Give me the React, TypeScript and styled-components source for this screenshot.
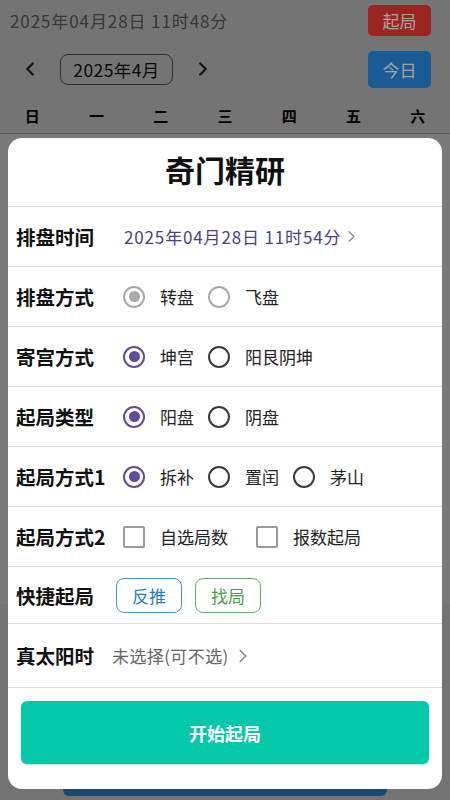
import styled, { createGlobalStyle, css } from 'styled-components'
import { useState } from 'react'
import { ChevronLeft, ChevronRight } from 'lucide-react'

const GlobalStyle = createGlobalStyle`
  * { box-sizing: border-box; }
  html, body { margin: 0; padding: 0; }
  body {
    width: 450px;
    height: 800px;
    overflow: hidden;
    font-family: "Noto Sans CJK SC", "Noto Sans", sans-serif;
  }
`

const WEEK = ['日', '一', '二', '三', '四', '五', '六']

type Option = { label: string }

export default function App() {
  const [panType, setPanType] = useState(0)
  const [palace, setPalace] = useState(0)
  const [juType, setJuType] = useState(0)
  const [method, setMethod] = useState(0)
  const [checks, setChecks] = useState([false, false])

  const renderRadios = (
    options: Option[],
    value: number,
    onChange: (i: number) => void,
    disabled?: boolean
  ) =>
    options.map((o, i) => (
      <Choice key={o.label} onClick={() => !disabled && onChange(i)}>
        <Radio checked={value === i} disabled={disabled} />
        <ChoiceText>{o.label}</ChoiceText>
      </Choice>
    ))

  return (
    <Screen>
      <GlobalStyle />
      <Page>
        <TopBar>
          <NowText>2025年04月28日 11时48分</NowText>
          <PageButton tone="red">起局</PageButton>
        </TopBar>
        <NavBar>
          <NavArrow>
            <ChevronLeft size={22} strokeWidth={2.6} />
          </NavArrow>
          <MonthBox>2025年4月</MonthBox>
          <NavArrow right>
            <ChevronRight size={22} strokeWidth={2.6} />
          </NavArrow>
          <NavSpacer />
          <PageButton tone="blue" tall>
            今日
          </PageButton>
        </NavBar>
        <WeekRow>
          {WEEK.map(w => (
            <WeekDay key={w}>{w}</WeekDay>
          ))}
        </WeekRow>
        <CalendarBody />
        <BottomArea>
          <BottomBar />
        </BottomArea>
      </Page>

      <Backdrop />

      <Dialog>
        <Title>奇门精研</Title>

        <Row>
          <Label>排盘时间</Label>
          <TimeText>2025年04月28日 11时54分</TimeText>
          <ChevronRight size={19} strokeWidth={1.6} color="#8a8a8a" />
        </Row>

        <Row>
          <Label>排盘方式</Label>
          {renderRadios(
            [{ label: '转盘' }, { label: '飞盘' }],
            panType,
            setPanType,
            true
          )}
        </Row>

        <Row>
          <Label>寄宫方式</Label>
          {renderRadios(
            [{ label: '坤宫' }, { label: '阳艮阴坤' }],
            palace,
            setPalace
          )}
        </Row>

        <Row>
          <Label>起局类型</Label>
          {renderRadios(
            [{ label: '阳盘' }, { label: '阴盘' }],
            juType,
            setJuType
          )}
        </Row>

        <Row>
          <Label>起局方式1</Label>
          {renderRadios(
            [{ label: '拆补' }, { label: '置闰' }, { label: '茅山' }],
            method,
            setMethod
          )}
        </Row>

        <Row>
          <Label>起局方式2</Label>
          {['自选局数', '报数起局'].map((t, i) => (
            <Choice
              key={t}
              wide
              onClick={() =>
                setChecks(checks.map((c, j) => (j === i ? !c : c)))
              }
            >
              <CheckBox checked={checks[i]} />
              <ChoiceText>{t}</ChoiceText>
            </Choice>
          ))}
        </Row>

        <Row short>
          <Label width={100}>快捷起局</Label>
          <OutlineButton tone="blue">反推</OutlineButton>
          <OutlineButton tone="green">找局</OutlineButton>
        </Row>

        <Row tall>
          <Label width={96}>真太阳时</Label>
          <HintText>未选择(可不选)</HintText>
          <ChevronRight size={22} strokeWidth={1.8} color="#8a8a8a" />
        </Row>

        <Footer>
          <StartButton>开始起局</StartButton>
        </Footer>
      </Dialog>
    </Screen>
  )
}

const Screen = styled.div`
  position: relative;
  width: 450px;
  height: 800px;
  overflow: hidden;
`

/* page under the dialog */

const Page = styled.div`
  display: flex;
  flex-direction: column;
  height: 800px;
  background: #b6b6b6;
`

const TopBar = styled.div`
  display: flex;
  align-items: center;
  justify-content: space-between;
  height: 41px;
  padding: 0 19px 0 10px;
`

const NowText = styled.div`
  font-size: 17px;
  color: #575757;
  letter-spacing: 0.9px;
`

type PageButtonProps = { tone: 'red' | 'blue'; tall?: boolean }

const PageButton = styled.div<PageButtonProps>`
  width: 63px;
  height: ${p => (p.tall ? 37 : 31)}px;
  border-radius: 5px;
  display: flex;
  align-items: center;
  justify-content: center;
  font-size: 17px;
  color: #fff;
  background: ${p => (p.tone === 'red' ? '#f03a30' : '#278fe9')};
`

const NavBar = styled.div`
  display: flex;
  align-items: center;
  height: 56px;
  padding: 0 19px;
`

const NavArrow = styled.div<{ right?: boolean }>`
  display: flex;
  align-items: center;
  color: #222;
  margin: ${p => (p.right ? '0 0 0 19px' : '0 19px 0 0')};
`

const MonthBox = styled.div`
  width: 113px;
  height: 31px;
  border: 1.5px solid #4a4a4a;
  border-radius: 8px;
  display: flex;
  align-items: center;
  justify-content: center;
  font-size: 17.5px;
  letter-spacing: 0.4px;
  color: #111;
`

const NavSpacer = styled.div`
  flex: 1;
`

const WeekRow = styled.div`
  display: grid;
  grid-template-columns: repeat(7, 1fr);
  height: 37px;
  border-bottom: 1.5px solid #8c8c8c;
`

const WeekDay = styled.div`
  display: flex;
  align-items: center;
  justify-content: center;
  font-size: 15px;
  font-weight: 700;
  color: #000;
`

const CalendarBody = styled.div`
  height: 470px;
  background: #bdbdbd;
`

const BottomArea = styled.div`
  flex: 1;
  display: flex;
  flex-direction: column;
  justify-content: flex-end;
  align-items: center;
  padding-bottom: 4px;
`

const BottomBar = styled.div`
  width: 324px;
  height: 40px;
  border-radius: 6px;
  background: #2a6fad;
`

/* dialog */

const Backdrop = styled.div`
  position: absolute;
  inset: 0;
  background: rgba(0, 0, 0, 0.36);
`

const Dialog = styled.div`
  position: absolute;
  left: 8px;
  top: 138px;
  width: 434px;
  display: flex;
  flex-direction: column;
  background: #fff;
  border-radius: 14px;
  overflow: hidden;
`

const Title = styled.div`
  height: 69px;
  display: flex;
  align-items: center;
  justify-content: center;
  font-size: 30px;
  font-weight: 700;
  color: #111;
  border-bottom: 1.5px solid #dedede;
  padding-bottom: 7px;
`

type RowProps = { short?: boolean; tall?: boolean }

const Row = styled.div<RowProps>`
  display: flex;
  align-items: center;
  height: ${p => (p.short ? 57 : p.tall ? 64 : 60)}px;
  padding-left: 8px;
  border-bottom: 1.5px solid #e0e0e0;
`

const Label = styled.div<{ width?: number }>`
  width: ${p => p.width ?? 107}px;
  flex-shrink: 0;
  font-size: 19.5px;
  font-weight: 700;
  color: #111;
  white-space: nowrap;
`

const Choice = styled.div<{ wide?: boolean }>`
  display: flex;
  align-items: center;
  gap: 15px;
  margin-right: ${p => (p.wide ? 28 : 14)}px;
  cursor: pointer;
`

const ChoiceText = styled.span`
  font-size: 17px;
  color: #222;
`

const Radio = styled.span<{ checked?: boolean; disabled?: boolean }>`
  width: 22px;
  height: 22px;
  border-radius: 50%;
  border: 2px solid
    ${p => (p.disabled ? '#a8a8a8' : p.checked ? '#614a9f' : '#3a3a3a')};
  display: flex;
  align-items: center;
  justify-content: center;

  ${p =>
    p.checked &&
    css`
      &::after {
        content: '';
        width: 11px;
        height: 11px;
        border-radius: 50%;
        background: ${p.disabled ? '#a8a8a8' : '#614a9f'};
      }
    `}
`

const CheckBox = styled.span<{ checked?: boolean }>`
  width: 22px;
  height: 22px;
  border: 2px solid #9a9a9a;
  border-radius: 2px;
  background: ${p => (p.checked ? '#614a9f' : '#fff')};
`

const TimeText = styled.span`
  font-size: 17px;
  letter-spacing: 0.85px;
  color: #4b3f86;
  margin: 0 1px 0 1px;
`

const HintText = styled.span`
  font-size: 17px;
  letter-spacing: 0.4px;
  color: #666;
  margin: 0 3px 0 0;
`

const OutlineButton = styled.div<{ tone: 'blue' | 'green' }>`
  width: 66px;
  height: 35px;
  border-radius: 8px;
  display: flex;
  align-items: center;
  justify-content: center;
  font-size: 17px;
  margin-right: 13px;
  border: 1.5px solid ${p => (p.tone === 'blue' ? '#4a8fc6' : '#69aa6a')};
  color: ${p => (p.tone === 'blue' ? '#2b7cbd' : '#4d9a4e')};
`

const Footer = styled.div`
  padding: 13px 13px 25px;
`

const StartButton = styled.div`
  height: 63px;
  border-radius: 6px;
  background: #03c8a9;
  display: flex;
  align-items: center;
  justify-content: center;
  font-size: 18px;
  font-weight: 700;
  color: #fff;
  box-shadow: 0 1px 2px rgba(0, 150, 130, 0.3);
`
